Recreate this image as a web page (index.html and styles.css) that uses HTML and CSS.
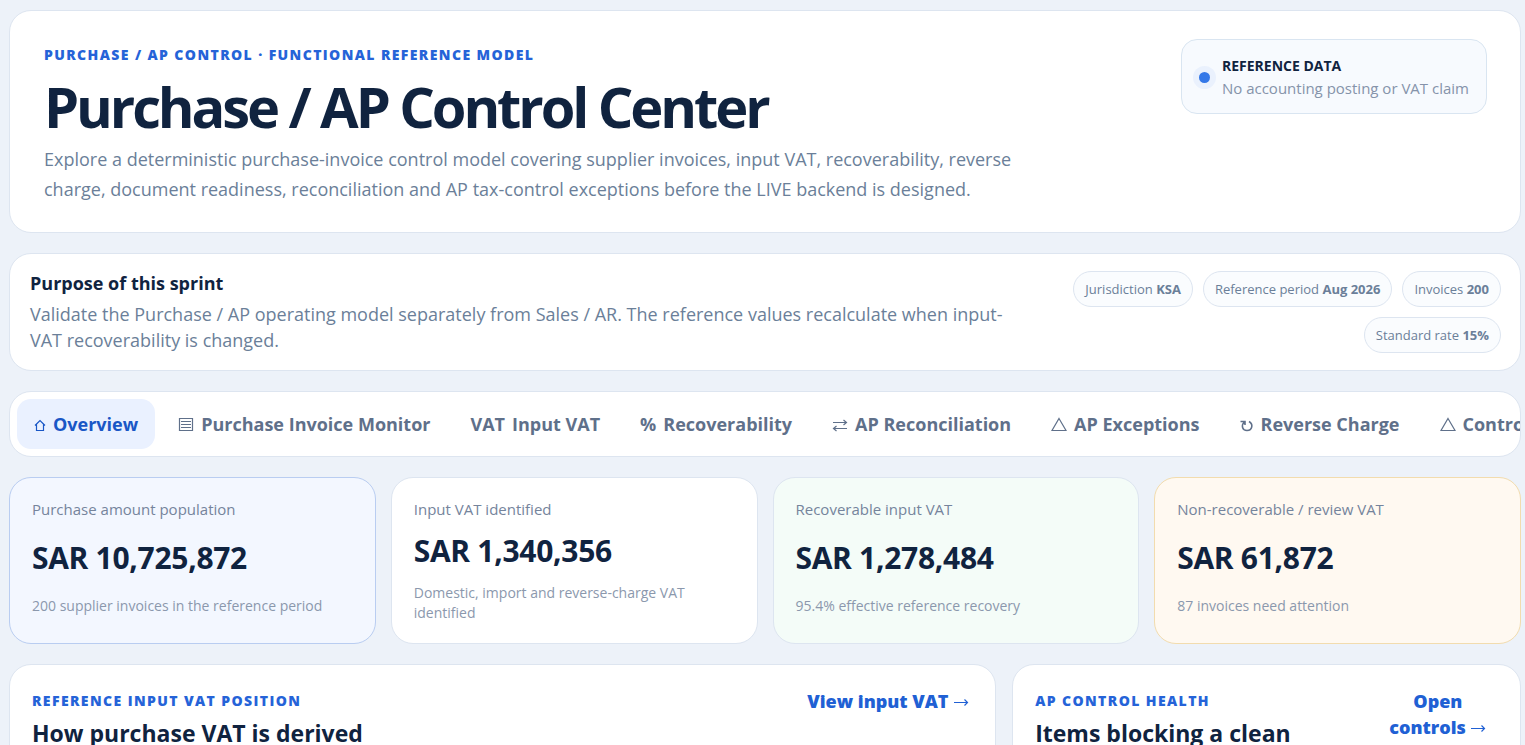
FILE: index.html
```html
<!DOCTYPE html>
<html lang="en">
<head>
  <meta charset="UTF-8">
  <meta name="viewport" content="width=device-width, initial-scale=1">
  <title>Purchase / AP Control Center</title>
  <link rel="stylesheet" href="styles.css">
</head>
<body>

  <main class="page">
    <header class="card hero">
      <div class="hero-text">
        <p class="eyebrow">PURCHASE / AP CONTROL · FUNCTIONAL REFERENCE MODEL</p>
        <h1>Purchase / AP Control Center</h1>
        <p class="lead">Explore a deterministic purchase-invoice control model covering supplier invoices, input VAT, recoverability, reverse charge, document readiness, reconciliation and AP tax-control exceptions before the LIVE backend is designed.</p>
      </div>
      <div class="status">
        <span class="dot"></span>
        <div>
          <strong>REFERENCE DATA</strong>
          <span class="status-note">No accounting posting or VAT claim</span>
        </div>
      </div>
    </header>

    <section class="card purpose">
      <div class="purpose-text">
        <h2>Purpose of this sprint</h2>
        <p>Validate the Purchase / AP operating model separately from Sales / AR. The reference values recalculate when input-VAT recoverability is changed.</p>
      </div>
      <div class="pills">
        <span class="pill">Jurisdiction <b>KSA</b></span>
        <span class="pill">Reference period <b>Aug 2026</b></span>
        <span class="pill">Invoices <b>200</b></span>
        <span class="pill">Standard rate <b>15%</b></span>
      </div>
    </section>

    <nav class="card tabs">
      <button class="tab active" type="button">
        <svg width="12" height="16" viewBox="0 0 12 16"><path d="M2.5 8.5V14.5H9.5V8.5M1 9.5L6 4.5L11 9.5"/></svg>
        Overview
      </button>
      <button class="tab" type="button">
        <svg width="16" height="16" viewBox="0 0 16 16"><path d="M1.5 2.5H14.5V14.5H1.5ZM3 5.5H13M3 8.5H13M3 11.5H13"/></svg>
        Purchase Invoice Monitor
      </button>
      <button class="tab" type="button"><span>VAT</span> Input VAT</button>
      <button class="tab" type="button"><span>%</span> Recoverability</button>
      <button class="tab" type="button">
        <svg width="16" height="16" viewBox="0 0 16 16"><path d="M1 6.5H14.5M11.5 4L14.5 6.5L11.5 9M15 12.5H1.5M4.5 10L1.5 12.5L4.5 15"/></svg>
        AP Reconciliation
      </button>
      <button class="tab" type="button">
        <svg width="16" height="16" viewBox="0 0 16 16"><path d="M8 2.5L15 14.5H1Z"/></svg>
        AP Exceptions
      </button>
      <button class="tab" type="button">
        <svg class="bold-icon" width="14" height="16" viewBox="0 0 14 16"><path d="M.5 5.5H5V9M4.5 6C1 9 2 14.5 7 14.5C12.5 14.5 13.5 8 9 5.5"/></svg>
        Reverse Charge
      </button>
      <button class="tab" type="button">
        <svg width="16" height="16" viewBox="0 0 16 16"><path d="M8 2.5L15 14.5H1Z"/></svg>
        Controls
      </button>
    </nav>

    <section class="metrics">
      <article class="card metric blue">
        <span class="metric-label">Purchase amount population</span>
        <strong>SAR 10,725,872</strong>
        <small>200 supplier invoices in the reference period</small>
      </article>
      <article class="card metric">
        <span class="metric-label">Input VAT identified</span>
        <strong>SAR 1,340,356</strong>
        <small>Domestic, import and reverse-charge VAT identified</small>
      </article>
      <article class="card metric green">
        <span class="metric-label">Recoverable input VAT</span>
        <strong>SAR 1,278,484</strong>
        <small>95.4% effective reference recovery</small>
      </article>
      <article class="card metric amber">
        <span class="metric-label">Non-recoverable / review VAT</span>
        <strong>SAR 61,872</strong>
        <small>87 invoices need attention</small>
      </article>
    </section>

    <section class="panels">
      <article class="card panel">
        <div>
          <p class="eyebrow">REFERENCE INPUT VAT POSITION</p>
          <h2>How purchase VAT is derived</h2>
        </div>
        <button class="text-button" type="button">View input VAT <svg width="16" height="12" viewBox="0 0 16 12"><path d="M1 6.5H14.5M11.5 3.5L14.5 6.5L11.5 9.5"/></svg></button>
      </article>
      <article class="card panel">
        <div>
          <p class="eyebrow">AP CONTROL HEALTH</p>
          <h2>Items blocking a clean</h2>
        </div>
        <button class="text-button" type="button">Open controls <svg width="16" height="12" viewBox="0 0 16 12"><path d="M1 6.5H14.5M11.5 3.5L14.5 6.5L11.5 9.5"/></svg></button>
      </article>
    </section>
  </main>

</body>
</html>
```
FILE: styles.css
```css
* {
  box-sizing: border-box;
}

html {
  scrollbar-width: none;
}

body {
  margin: 0;
  font-family: "Segoe UI", "Open Sans", "Noto Sans", sans-serif;
  background: #edf2f9;
  color: #10233f;
}

h1, h2, p {
  margin: 0;
}

button {
  font-family: inherit;
  border: 0;
  background: none;
  cursor: pointer;
}

svg {
  fill: none;
  stroke: currentColor;
  stroke-width: 1.2;
  flex: none;
}

.page {
  display: grid;
  grid-template-columns: minmax(0, 1fr);
  gap: 20px;
  padding: 10px 4px 0 9px;
}

.card {
  background: #fff;
  border: 1px solid #dde5f0;
  border-radius: 22px;
}

.eyebrow {
  font-size: 14px;
  line-height: 20px;
  font-weight: 800;
  letter-spacing: 0.1em;
  color: #2563d8;
}

/* hero */
.hero {
  display: flex;
  justify-content: space-between;
  align-items: flex-start;
  gap: 24px;
  padding: 28px 33px 28px 34px;
}

.hero-text {
  max-width: 1000px;
  padding-top: 6px;
}

h1 {
  font-size: 56px;
  line-height: 60px;
  font-weight: 700;
  letter-spacing: -0.055em;
  margin: 11px 0 8px;
}

.lead {
  font-size: 18px;
  line-height: 30px;
  color: #6b7f99;
}

.status {
  display: flex;
  align-items: center;
  gap: 12px;
  padding: 15px 17px 14px;
  background: #f7fafe;
  border: 1px solid #d9e5f1;
  border-radius: 16px;
}

.status strong {
  display: block;
  font-size: 14px;
  line-height: 22px;
}

.status-note {
  display: block;
  font-size: 15px;
  line-height: 22px;
  color: #8593aa;
}

.dot {
  width: 11px;
  height: 11px;
  border-radius: 50%;
  background: #3478e8;
  box-shadow: 0 0 0 6px #eaf1fd;
}

/* purpose */
.purpose {
  display: flex;
  justify-content: space-between;
  align-items: center;
  gap: 24px;
  padding: 17px 19px 17px 20px;
}

.purpose-text {
  max-width: 1000px;
}

.purpose h2 {
  font-size: 18px;
  line-height: 24px;
  margin-bottom: 6px;
}

.purpose p {
  font-size: 18px;
  line-height: 26px;
  color: #6b7f99;
}

.pills {
  display: flex;
  flex-wrap: wrap;
  justify-content: flex-end;
  gap: 10px;
  flex: 0 0 30%;
}

.pill {
  padding: 8px 11px;
  font-size: 13px;
  line-height: 18px;
  color: #6b7f99;
  background: #fafcfe;
  border: 1px solid #dde5f0;
  border-radius: 18px;
}

/* tabs */
.tabs {
  display: flex;
  gap: 6px;
  padding: 7px;
  overflow: hidden;
}

.tab {
  display: flex;
  align-items: center;
  gap: 7px;
  flex: none;
  padding: 12px 17px;
  font-size: 18px;
  line-height: 26px;
  font-weight: 700;
  color: #5f708a;
  border-radius: 14px;
}

.tab.active {
  color: #1957c6;
  background: #eaf1ff;
}

.bold-icon {
  stroke-width: 1.6;
}

/* metrics */
.metrics {
  display: grid;
  grid-template-columns: repeat(4, minmax(0, 1fr));
  gap: 15px;
}

.metric {
  display: grid;
  gap: 12px;
  padding: 21px 22px 20px;
}

.metric-label {
  font-size: 15px;
  line-height: 20px;
  color: #75849c;
}

.metric strong {
  font-size: 30px;
  line-height: 40px;
  letter-spacing: -0.01em;
}

.metric small {
  font-size: 14px;
  line-height: 20px;
  color: #8b98ad;
}

.metric.blue {
  background: #f3f7ff;
  border-color: #b9cdf1;
}

.metric.green {
  background: #f4fcf8;
}

.metric.amber {
  background: #fff9f1;
  border-color: #f2dcae;
}

/* panels */
.panels {
  display: grid;
  grid-template-columns: minmax(0, 1.94fr) minmax(0, 1fr);
  gap: 16px;
}

.panel {
  display: flex;
  justify-content: space-between;
  align-items: flex-start;
  padding: 23px 22px;
}

.panel .eyebrow {
  line-height: 26px;
}

.panel h2 {
  font-size: 23px;
  line-height: 38px;
}

.text-button {
  max-width: 26%;
  padding: 0 4px;
  font-size: 18px;
  line-height: 26px;
  font-weight: 800;
  color: #2060d4;
}
```
